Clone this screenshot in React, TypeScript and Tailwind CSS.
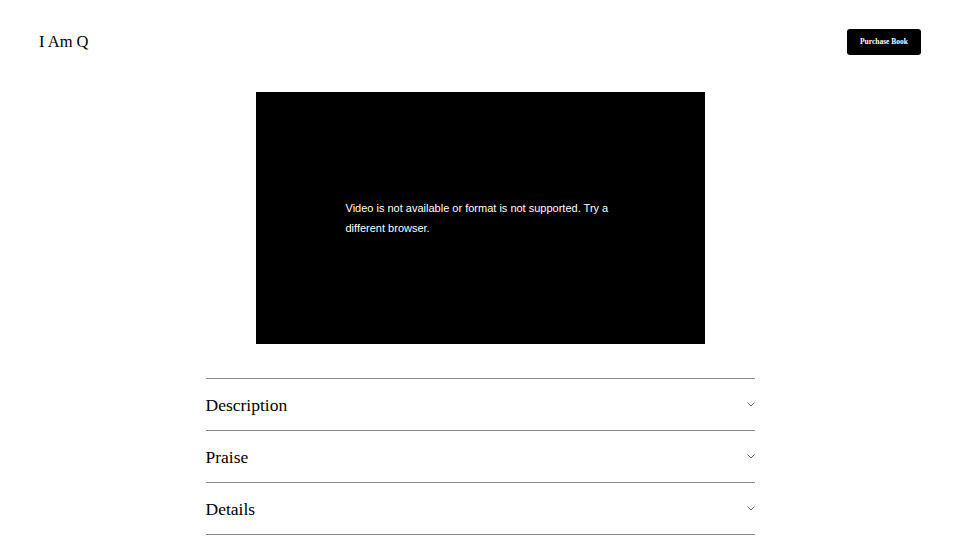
import React from 'react';

const sections = ['Description', 'Praise', 'Details'];

const Chevron: React.FC = () => (
  <svg width="8" height="5" viewBox="0 0 8 5" fill="none">
    <path d="M0.5 0.5 L4 4 L7.5 0.5" stroke="#666" strokeWidth="1" />
  </svg>
);

const App: React.FC = () => {
  return (
    <div className="min-h-[540px] w-full bg-white font-['Liberation_Serif',serif] text-black">
      <header className="flex items-center justify-between h-[84px] pl-[39px] pr-[39px]">
        <a href="#" className="text-[16.5px] leading-none">I Am Q</a>
        <button className="w-[74px] h-[26px] rounded-[3px] bg-black text-white text-[7.5px] font-bold">
          Purchase Book
        </button>
      </header>

      <main className="flex flex-col items-center pt-[8px]">
        <div className="w-[449px] h-[252px] bg-black flex items-center pl-[90px] pr-[80px]">
          <p className="font-['Liberation_Sans',sans-serif] text-[11px] leading-[20px] text-white">
            Video is not available or format is not supported. Try a different browser.
          </p>
        </div>

        <div className="w-[549px] mt-[34px] border-t border-[#8a8a8a]">
          {sections.map((title) => (
            <div
              key={title}
              className="flex items-center justify-between h-[52px] border-b border-[#8a8a8a]"
            >
              <span className="text-[17.5px] leading-none pt-[2px]">{title}</span>
              <Chevron />
            </div>
          ))}
        </div>
      </main>
    </div>
  );
};

export default App;
